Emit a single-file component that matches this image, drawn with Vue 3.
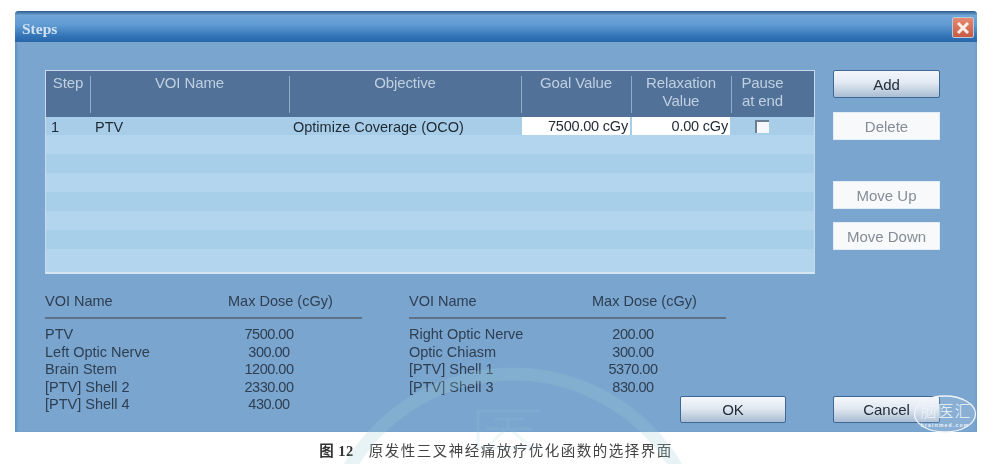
<script setup>
const headers = [
  { key: 'step', lines: ['Step'] },
  { key: 'voi', lines: ['VOI Name'] },
  { key: 'obj', lines: ['Objective'] },
  { key: 'goal', lines: ['Goal Value'] },
  { key: 'rel', lines: ['Relaxation', 'Value'] },
  { key: 'pause', lines: ['Pause', 'at end'] }
]
const emptyRows = [1, 2, 3, 4, 5, 6, 7]
const leftDoses = [
  ['PTV', '7500.00'],
  ['Left Optic Nerve', '300.00'],
  ['Brain Stem', '1200.00'],
  ['[PTV] Shell 2', '2330.00'],
  ['[PTV] Shell 4', '430.00']
]
const rightDoses = [
  ['Right Optic Nerve', '200.00'],
  ['Optic Chiasm', '300.00'],
  ['[PTV] Shell 1', '5370.00'],
  ['[PTV] Shell 3', '830.00']
]
const doseBlocks = [leftDoses, rightDoses]
</script>

<template>
  <div class="page">
    <div class="window">
      <div class="titlebar">
        <span class="title">Steps</span>
        <button class="close">
          <svg width="14" height="14" viewBox="0 0 14 14">
            <path d="M2 2 L12 12 M12 2 L2 12" stroke="#fbeee9" stroke-width="3" fill="none" />
          </svg>
        </button>
      </div>
      <div class="content">
        <div class="top">
          <div class="table">
            <div class="thead">
              <div v-for="h in headers" :key="h.key" class="th" :class="h.key">
                <span v-for="l in h.lines" :key="l">{{ l }}</span>
              </div>
            </div>
            <div class="row first">
              <div class="td step">1</div>
              <div class="td voi">PTV</div>
              <div class="td obj">Optimize Coverage (OCO)</div>
              <div class="td goal"><span class="input">7500.00 cGy</span></div>
              <div class="td rel"><span class="input">0.00 cGy</span></div>
              <div class="td pause"><span class="check"></span></div>
            </div>
            <div v-for="r in emptyRows" :key="r" class="row" :class="r % 2 ? 'light' : 'dark'"></div>
          </div>
          <div class="side">
            <button class="btn primary">Add</button>
            <button class="btn off delete">Delete</button>
            <button class="btn off up">Move Up</button>
            <button class="btn off down">Move Down</button>
          </div>
        </div>
        <div class="bottom">
          <div v-for="(block, i) in doseBlocks" :key="i" class="doses">
            <div class="dose-head">
              <span>VOI Name</span>
              <span>Max Dose (cGy)</span>
            </div>
            <div v-for="d in block" :key="d[0]" class="dose-row">
              <span>{{ d[0] }}</span>
              <span class="val">{{ d[1] }}</span>
            </div>
          </div>
          <button class="btn primary ok">OK</button>
          <button class="btn primary cancel">Cancel</button>
        </div>
      </div>
    </div>
    <div class="caption"><b>图 12</b><span>原发性三叉神经痛放疗优化函数的选择界面</span></div>

    <svg class="watermark" width="991" height="464" viewBox="0 0 991 464">
      <g fill="none" stroke="#a0cdd7">
        <circle cx="513" cy="564" r="190" stroke-opacity="0.24" stroke-width="13" />
        <path d="M478 411 H540 M478 411 V448 H540" stroke-opacity="0.16" stroke-width="3" />
        <path d="M494 419 H524 M486 429 H532 M508 419 V429 M506 429 L488 446 M510 429 L530 446" stroke-opacity="0.16" stroke-width="3" />
      </g>
    </svg>
    <svg class="stamp" width="66" height="42" viewBox="0 0 66 42">
      <ellipse cx="33" cy="20" rx="30.5" ry="18" fill="rgba(255,255,255,0.12)" stroke="#eef4f9" stroke-width="1.3" />
      <text x="34" y="23" text-anchor="middle" class="stamp-cn">脑医汇</text>
      <text x="33" y="33" text-anchor="middle" class="stamp-en">brainmed.com</text>
    </svg>
  </div>
</template>

<style>
html, body { margin: 0; background: #fff; }
</style>

<style scoped>
.page {
  position: relative;
  width: 991px;
  height: 464px;
  overflow: hidden;
  background: #fff;
  font-family: "Liberation Sans", Arial, sans-serif;
  padding: 11px 14px 0 15px;
  box-sizing: border-box;
}
.window {
  height: 421px;
  background: #79a5cf;
  border-radius: 4px 4px 0 0;
  box-shadow: inset 3px 0 2px -1px #5f90c6, inset -2px 0 2px -1px #6c9bc9;
  filter: blur(0.6px);
  display: flex;
  flex-direction: column;
  color: #2b3a4b;
}
.titlebar {
  height: 31px;
  flex: none;
  display: flex;
  align-items: center;
  justify-content: space-between;
  padding: 0 3px 0 7px;
  border-radius: 4px 4px 0 0;
  background: linear-gradient(#2e5a8c 0, #6fa6d7 14%, #5f9ad1 45%, #2f70b4 85%, #2a66a8 100%);
}
.title {
  font-family: "Liberation Serif", serif;
  font-weight: 700;
  font-size: 15.5px;
  padding-top: 4px;
  color: #cfe0f0;
}
.close {
  width: 22px;
  height: 21px;
  margin: 2px 0 0;
  padding: 0;
  border: 1px solid #b9cadb;
  border-radius: 2px;
  background: linear-gradient(#e58a72, #c85a44);
  display: flex;
  align-items: center;
  justify-content: center;
}
.content {
  flex: 1;
  padding: 28px 37px 0 30px;
  display: flex;
  flex-direction: column;
}
.top {
  display: flex;
  justify-content: space-between;
}
.table {
  width: 770px;
  height: 204px;
  box-sizing: border-box;
  border: 1px solid #c9dbea;
  border-bottom: 2px solid #d5e5f1;
  overflow: hidden;
  background: #a6cfeb;
  display: flex;
  flex-direction: column;
}
.thead {
  display: flex;
  flex: none;
  height: 46px;
  background: #527198;
}
.th {
  display: flex;
  flex-direction: column;
  align-items: center;
  padding-top: 3px;
  box-sizing: border-box;
  font-size: 15px;
  line-height: 18px;
  letter-spacing: -0.1px;
  color: #bfd0e1;
  position: relative;
}
.th + .th::before {
  content: "";
  position: absolute;
  left: 0;
  top: 5px;
  bottom: 4px;
  width: 1px;
  background: #8eaccb;
}
.step { width: 44px; }
.voi { width: 199px; }
.obj { width: 232px; }
.goal { width: 110px; }
.rel { width: 100px; }
.pause { width: 83px; }
.th.pause { width: 63px; }
.row {
  flex: none;
  height: 19px;
  display: flex;
  align-items: center;
}
.row:last-child { flex: 1; }
.row.first { height: 18px; background: #a7cde8; }
.row.light { background: #b3d6ee; }
.row.dark { background: #a7cfe9; }
.td {
  font-size: 14.5px;
  color: #1f2933;
  box-sizing: border-box;
  white-space: nowrap;
  padding-top: 1px;
}
.td.step { padding-left: 5px; }
.td.voi { padding-left: 5px; }
.td.obj { padding-left: 4px; }
.td.goal, .td.rel { height: 18px; padding: 0 1px; }
.input {
  display: block;
  height: 18px;
  line-height: 19px;
  background: #fff;
  text-align: right;
  padding-right: 2px;
  letter-spacing: -0.2px;
}
.td.pause { display: flex; padding-left: 24px; padding-top: 0; }
.check {
  width: 14px;
  height: 13px;
  box-sizing: border-box;
  background: #f5f8fb;
  border-top: 2px solid #6b7f94;
  border-left: 2px solid #6b7f94;
}
.side {
  width: 107px;
  display: flex;
  flex-direction: column;
}
.btn {
  width: 107px;
  height: 28px;
  box-sizing: border-box;
  margin: 0;
  padding: 0;
  font-family: "Liberation Sans", Arial, sans-serif;
  font-size: 15px;
  flex: none;
}
.primary {
  border: 1.5px solid #3f6796;
  border-radius: 2px;
  background: linear-gradient(#f4f7fb 0, #e2e9f2 45%, #a9bdd4 100%);
  color: #232c38;
}
.off {
  border: 1px solid #e2ecf4;
  background: #f7f9fb;
  color: #868c96;
}
.delete { margin-top: 14px; }
.up { margin-top: 41px; }
.down { margin-top: 13px; }
.bottom {
  flex: 1;
  display: flex;
  align-items: flex-start;
  margin-top: 18px;
  position: relative;
}
.doses {
  width: 317px;
  font-size: 14.5px;
  color: #2f3e50;
}
.doses + .doses { margin-left: 47px; }
.dose-head {
  display: grid;
  grid-template-columns: 183px 1fr;
  height: 25px;
  line-height: 18px;
  border-bottom: 2px solid #5f7288;
  margin-bottom: 7px;
}
.dose-row {
  display: grid;
  grid-template-columns: 183px 82px;
  height: 17.6px;
  line-height: 17.6px;
}
.val { text-align: center; letter-spacing: -0.5px; }
.ok { margin: 104px 0 0 -46px; height: 27px; width: 106px; }
.cancel { margin: 104px 0 0 47px; height: 27px; }
.caption {
  margin-top: 10px;
  height: 18px;
  display: flex;
  justify-content: center;
  gap: 15px;
  font-family: "Liberation Serif", "Noto Sans CJK SC", serif;
  font-size: 14.5px;
  letter-spacing: 1.5px;
  line-height: 18px;
  color: #444;
  filter: blur(0.3px);
}
.caption b { color: #333; letter-spacing: 0.5px; }
.watermark {
  position: absolute;
  left: 0;
  top: 0;
  pointer-events: none;
}
.stamp {
  position: absolute;
  left: 912px;
  top: 394px;
  pointer-events: none;
}
.stamp-cn {
  font-family: "Noto Sans CJK SC", sans-serif;
  font-size: 16px;
  font-weight: 300;
  letter-spacing: 1px;
  fill: #eef5fb;
}
.stamp-en {
  font-family: "Liberation Sans", sans-serif;
  font-size: 5px;
  letter-spacing: 1.2px;
  font-weight: 700;
  fill: #eef5fb;
}
</style>
